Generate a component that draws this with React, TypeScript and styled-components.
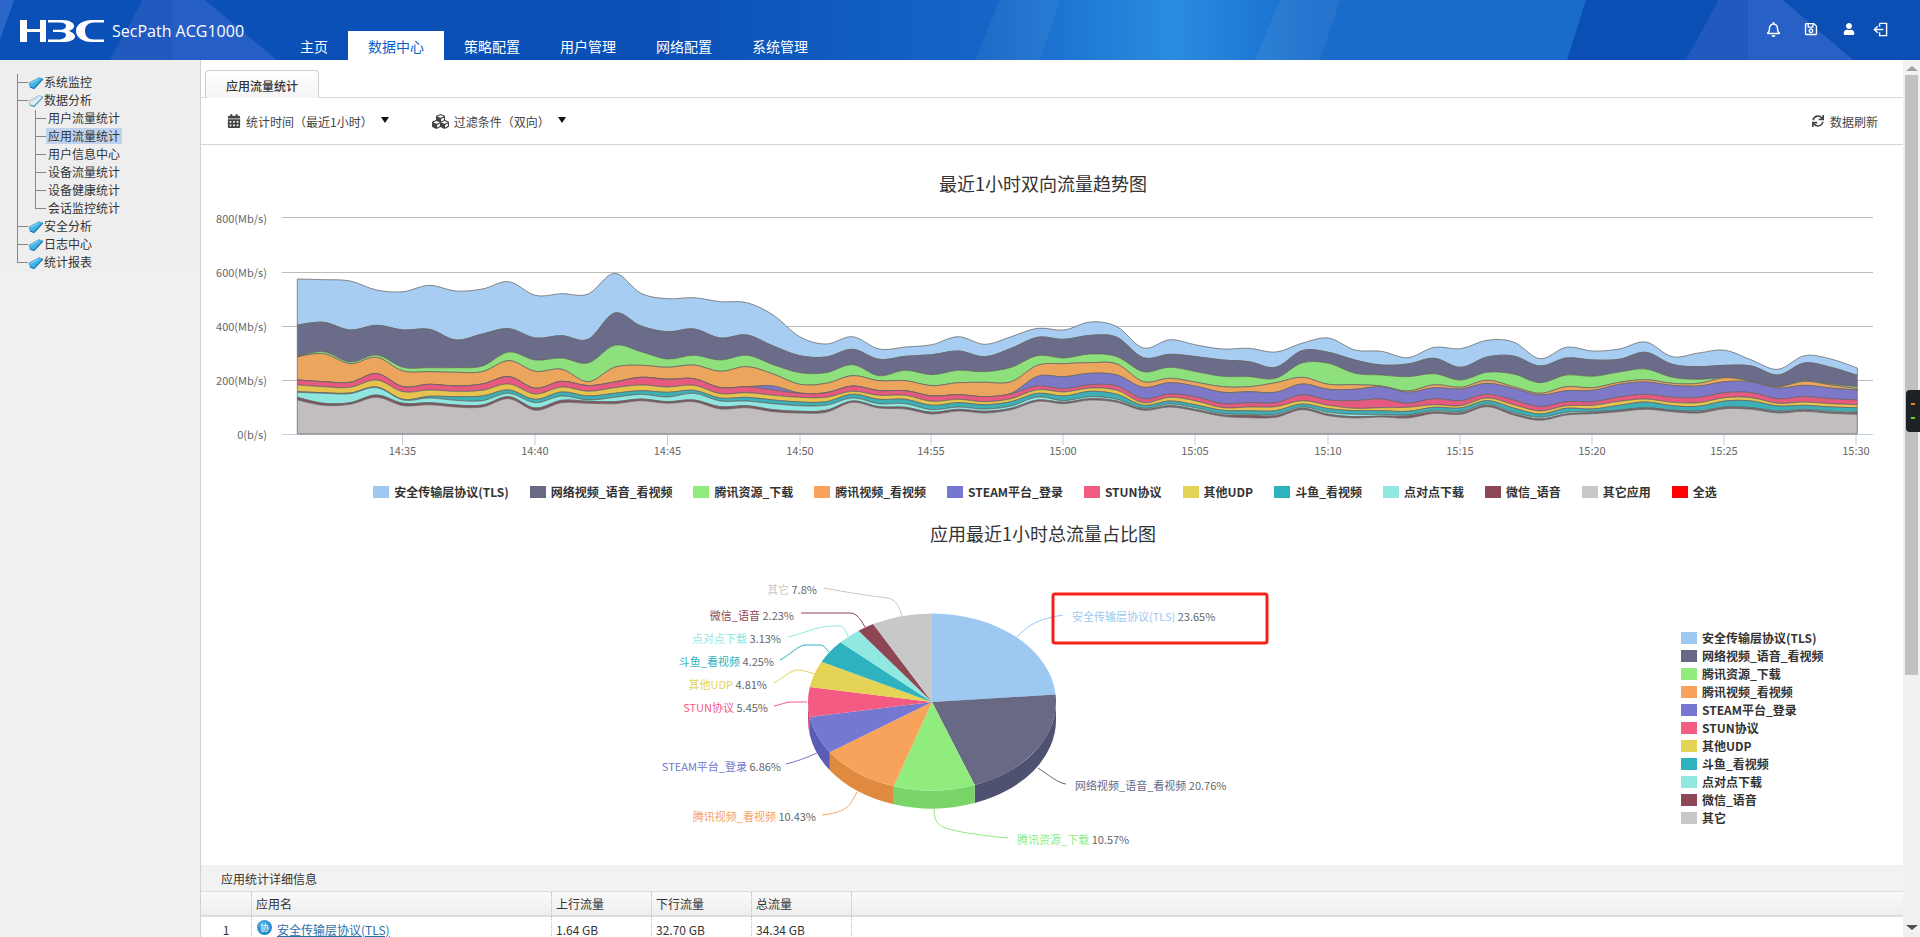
import React from 'react';
import styled, { createGlobalStyle } from 'styled-components';
import { FaRegBell, FaRegSave, FaUser, FaCalendarAlt, FaCubes, FaSync } from 'react-icons/fa';

const FONT = '"Noto Sans CJK SC","Noto Sans",sans-serif';

const Global = createGlobalStyle`
  html, body { margin: 0; padding: 0; height: 937px; overflow: hidden; background: #fff; }
  body { font-family: ${FONT}; font-size: 12px; color: #333; }
  * { box-sizing: border-box; }
`;

const Page = styled.div`display:flex;flex-direction:column;width:1920px;height:937px;overflow:hidden;`;
const Header = styled.header`position:relative;display:flex;height:60px;flex:none;background:#0b4fb5;overflow:hidden;`;
const HeaderArt = styled.svg`position:absolute;left:0;top:0;width:1920px;height:60px;`;
const Brand = styled.div`position:relative;display:flex;align-items:center;gap:8px;width:280px;padding:2px 0 0 20px;`;
const BrandName = styled.span`color:#fff;font:400 16px/20px "Open Sans",sans-serif;white-space:nowrap;`;
const Nav = styled.nav`position:relative;display:flex;align-self:flex-end;height:29px;`;
const NavItem = styled.a<{ $active?: boolean }>`
  padding:0 20px;font-size:14px;line-height:30px;color:${p => (p.$active ? '#0d5fc4' : '#fff')};
  background:${p => (p.$active ? '#fff' : 'transparent')};
`;
const HeaderTools = styled.div`position:relative;display:flex;margin-left:auto;padding:0 28px 2px 0;align-items:center;`;
const ToolSlot = styled.span<{ $w: number }>`display:flex;justify-content:center;width:${p => p.$w}px;color:#fff;`;

const Body = styled.div`display:flex;flex:1;min-height:0;`;
const Sidebar = styled.aside`width:201px;flex:none;background:#f1f1f1;border-right:1px solid #d0d0d0;`;
const Tree = styled.div`position:relative;padding:13px 0 1px;background:#eee;
  &::before{content:'';position:absolute;left:17px;top:14px;bottom:10px;width:1px;background:#888;}`;
const TreeRow = styled.div<{ $indent: number }>`display:flex;align-items:center;height:18px;padding-left:${p => p.$indent}px;line-height:18px;color:#333;`;
const Tick = styled.span`width:11px;height:1px;background:#888;flex:none;`;
const SubTree = styled.div`position:relative;
  &::before{content:'';position:absolute;left:35px;top:1px;bottom:9px;width:1px;background:#888;}`;
const NodeLabel = styled.span`margin-left:1px;`;
const LeafLabel = styled.span<{ $active?: boolean }>`padding:0 2px;height:16px;line-height:16px;background:${p => (p.$active ? '#bfd3ee' : 'transparent')};`;

const MainArea = styled.main`flex:1;min-width:0;overflow:hidden;background:#fff;`;
const TabBar = styled.div`display:flex;height:38px;padding:10px 0 0 4px;border-bottom:1px solid #d8d8d8;`;
const Tab = styled.div`height:28px;padding:0 20px;line-height:29px;border:1px solid #d0d0d0;border-bottom:none;border-radius:4px 4px 0 0;background:linear-gradient(#fff,#f4f4f4);color:#333;font-weight:500;`;
const Toolbar = styled.div`display:flex;align-items:center;height:47px;padding:0 25px 0 26px;border-bottom:1px solid #d4d4d4;`;
const ToolItem = styled.div<{ $gap?: number }>`display:flex;align-items:center;gap:5px;margin-right:${p => p.$gap ?? 0}px;color:#444;`;
const Caret = styled.span`width:0;height:0;margin-left:3px;margin-top:-2px;border:4px solid transparent;border-top:6px solid #111;border-bottom:none;`;
const Refresh = styled(ToolItem)`margin-left:auto;gap:6px;`;
const ChartTitle = styled.h2<{ $top: number }>`width:1684px;margin:${p => p.$top}px 0 0;text-align:center;font-weight:400;font-size:18px;line-height:24px;color:#333;`;
const TrendSvg = styled.svg`display:block;width:1702px;height:275px;`;
const HLegend = styled.div`display:flex;justify-content:center;gap:21px;width:1688px;height:20px;margin-top:12px;align-items:center;`;
const LegendItem = styled.div`display:flex;align-items:center;gap:5px;font-weight:700;color:#333;line-height:18px;white-space:nowrap;`;
const Swatch = styled.span<{ $c: string }>`width:16px;height:12px;flex:none;background:${p => p.$c};`;
const PieRow = styled.div`display:flex;height:320px;`;
const PieSvg = styled.svg`display:block;width:1480px;height:320px;flex:none;`;
const VLegend = styled.div`display:flex;flex-direction:column;padding-top:84px;`;
const VLegendItem = styled(LegendItem)`height:18px;`;

const SectionTitle = styled.div`height:27px;padding-left:20px;line-height:27px;background:#f2f2f2;border-bottom:1px solid #ddd;color:#333;`;
const GridRow = styled.div<{ $head?: boolean }>`
  display:grid;grid-template-columns:51px 300px 100px 100px 100px 1fr;height:25px;
  background:${p => (p.$head ? 'linear-gradient(#fafafa,#eee)' : '#fff')};
  border-bottom:${p => (p.$head ? '2px solid #ddd' : 'none')};
`;
const Cell = styled.div<{ $center?: boolean }>`display:flex;align-items:center;justify-content:${p => (p.$center ? 'center' : 'flex-start')};gap:5px;padding:0 4px;line-height:24px;border-right:1px dotted #bbb;color:#333;`;
const LastCell = styled.div``;
const AppBadge = styled.span`display:flex;align-items:center;justify-content:center;width:15px;height:15px;border-radius:50%;margin:-5px 0 0 1px;background:radial-gradient(circle at 40% 30%,#4db4e8,#0e76b6);color:#fff;font-size:9px;line-height:15px;`;
const AppLink = styled.a`color:#2c6ea8;text-decoration:underline;`;

const Scrollbar = styled.div`display:flex;flex-direction:column;align-items:center;width:17px;flex:none;background:#f1f1f1;`;
const ArrowUp = styled.span`width:0;height:0;margin:6px 0 4px;border:6px solid transparent;border-top:none;border-bottom:5px solid #a3a3a3;`;
const Thumb = styled.div`width:13px;height:600px;background:#c1c1c1;`;
const ArrowDown = styled.span`width:0;height:0;margin-top:auto;margin-bottom:7px;border:6px solid transparent;border-bottom:none;border-top:5px solid #505050;`;
const SideHandle = styled.div`position:absolute;right:0;top:390px;width:14px;height:42px;background:#1f2225;border-radius:4px 0 0 4px;display:flex;flex-direction:column;align-items:center;justify-content:center;gap:12px;`;
const HandleDot = styled.span<{ $c: string }>`width:4px;height:2px;background:${p => p.$c};`;
const Shell = styled.div`position:relative;`;

const SERIES = [
  ['安全传输层协议(TLS)', '#9dc8f1', '#a3cbf2', '#596a9e'],
  ['网络视频_语音_看视频', '#676985', '#6a6c8a', '#4f5170'],
  ['腾讯资源_下载', '#90ed7d', '#8ee07c', '#79d568'],
  ['腾讯视频_看视频', '#f7a35c', '#eca55c', '#e08a40'],
  ['STEAM平台_登录', '#7577d0', '#7d78c8', '#5a5cb5'],
  ['STUN协议', '#f45b82', '#e75a80', '#c94a6c'],
  ['其他UDP', '#e4d354', '#e5c34e', '#c4b440'],
  ['斗鱼_看视频', '#2fb2bf', '#3db0b5', '#2795a0'],
  ['点对点下载', '#91e8e1', '#8ee6de', '#78c8c2'],
  ['微信_语音', '#8d4653', '#85505f', '#733945'],
  ['其它', '#c8c8c8', '#c2bebf', '#a8a8a8'],
];

const D: number[][] = [
  [57,195,290,290,360,360,375,395,397,412,420],[59,187,275,281,365,365,380,398,400,430,436],
  [63,210,306,311,367,367,382,399,401,428,433],[90,196,285,292,341,341,360,381,383,405,412],
  [95,210,322,333,380,380,395,418,420,430,437],[76,208,323,335,373,373,390,409,414,428,434],
  [93,240,323,337,378,378,394,410,421,435,441],[87,222,318,335,372,372,391,408,422,435,441],
  [65,206,276,302,350,350,372,390,400,410,416],[106,234,300,334,385,385,402,418,428,444,451],
  [101,227,294,328,364,364,381,396,408,421,428],[102,238,309,365,377,377,394,408,420,424,430],
  [40,159,256,322,366,366,383,400,412,425,431],[100,198,275,316,352,352,375,392,403,417,422],
  [116,215,297,322,358,358,381,397,411,425,430],[113,207,286,315,356,356,376,391,400,420,425],
  [125,234,300,334,383,383,401,414,423,440,447],[128,225,286,320,380,380,398,412,423,437,443],
  [165,258,314,342,378,390,406,420,431,449,455],[230,287,338,373,399,400,412,426,437,454,459],
  [252,291,338,370,398,399,412,425,436,451,457],[230,268,314,347,378,378,394,403,414,423,427],
  [267,298,347,362,392,392,406,418,431,440,444],[261,289,331,362,392,392,406,418,431,442,447],
  [254,284,344,377,408,408,424,436,449,457,462],[230,273,331,368,404,404,418,428,441,448,453],
  [253,290,335,367,410,410,425,434,447,454,459],[230,265,322,365,400,402,416,425,438,445,449],
  [205,232,287,316,349,378,389,400,411,420,424],[210,238,294,311,350,386,396,408,422,427,431],
  [186,226,282,308,340,374,384,394,410,416,420],[200,232,290,312,345,378,391,403,418,423,427],
  [264,293,335,365,382,416,428,436,445,448,451],[239,283,322,355,368,402,412,423,432,437,441],
  [255,290,335,367,379,411,423,435,444,449,453],[267,300,349,380,397,431,443,451,461,465,469],
  [265,305,350,380,395,428,441,452,463,466,473],[276,322,355,368,397,428,440,452,463,467,472],
  [250,272,309,352,372,405,422,432,441,445,449],[234,277,310,373,388,420,436,446,457,463,467],
  [270,300,340,374,388,422,445,452,463,470,474],[274,315,345,378,380,417,443,452,463,468,471],
  [293,312,350,393,397,430,442,454,465,468,474],[262,295,341,374,383,416,434,442,452,456,460],
  [266,322,360,382,387,422,437,444,455,459,463],[241,291,337,361,370,403,414,422,432,436,440],
  [246,288,342,380,385,420,434,444,457,461,465],[296,318,368,400,405,440,453,462,472,477,481],
  [262,294,345,380,392,425,437,445,457,462,465],[273,300,349,383,391,425,436,447,455,458,461],
  [267,298,336,367,373,411,424,436,450,452,455],[246,277,327,359,366,403,417,426,443,445,448],
  [290,313,352,370,376,412,427,437,450,452,455],[279,320,358,370,378,412,428,439,453,456,459],
  [271,316,353,353,365,398,413,423,441,443,446],[300,318,364,364,366,398,413,423,443,445,448],
  [328,345,380,380,384,416,430,438,453,456,459],[287,309,362,364,376,410,426,436,448,451,454],
  [297,322,372,375,384,416,431,441,454,457,460],[324,346,380,386,390,420,434,443,456,459,463],
];

const X0 = 297.3, DX = 26.44, BASE = 434;
const toY = (z: number) => 260 + z / 3;
type P = [number, number];
const curveSeg = (pts: P[]) => {
  let d = '';
  for (let i = 0; i < pts.length - 1; i++) {
    const p0 = pts[Math.max(0, i - 1)], p1 = pts[i], p2 = pts[i + 1], p3 = pts[Math.min(pts.length - 1, i + 2)];
    const t = 0.17;
    d += `C${(p1[0] + (p2[0] - p0[0]) * t).toFixed(1)} ${(p1[1] + (p2[1] - p0[1]) * t).toFixed(1)} ${(p2[0] - (p3[0] - p1[0]) * t).toFixed(1)} ${(p2[1] - (p3[1] - p1[1]) * t).toFixed(1)} ${p2[0].toFixed(1)} ${p2[1].toFixed(1)}`;
  }
  return d;
};
const line = (s: number): P[] => D.map((r, i) => [X0 + DX * i, s >= 11 ? BASE : toY(r[s])]);
const areaPath = (s: number) => {
  const top = line(s), bot = line(s + 1).reverse();
  return `M${top[0][0]} ${top[0][1].toFixed(1)}${curveSeg(top)}L${bot[0][0].toFixed(1)} ${bot[0][1].toFixed(1)}${s >= 10 ? `L${bot[bot.length - 1][0]} ${BASE}` : curveSeg(bot)}Z`;
};

const YT: [string, number, number][] = [['800(Mb/s)', 217, 223], ['600(Mb/s)', 272, 277], ['400(Mb/s)', 326, 331], ['200(Mb/s)', 380, 385], ['0(b/s)', 434, 439]];
const XT: [string, number][] = [['14:35', 402.5], ['14:40', 535], ['14:45', 667.5], ['14:50', 800], ['14:55', 931], ['15:00', 1063], ['15:05', 1195], ['15:10', 1328], ['15:15', 1460], ['15:20', 1592], ['15:25', 1724], ['15:30', 1856]];

const TrendChart = () => (
  <TrendSvg viewBox="201 195 1702 275" fontFamily={FONT}>
    {YT.slice(0, 4).map(([, y]) => <line key={y} x1={282} x2={1873} y1={y + 0.5} y2={y + 0.5} stroke="#bdbdbd" />)}
    <line x1={282} x2={1873} y1={434.5} y2={434.5} stroke="#c0d0e0" />
    {XT.map(([, x]) => <line key={x} x1={x} x2={x} y1={434} y2={445} stroke="#c0d0e0" />)}
    {SERIES.map((s, i) => (
      <path key={s[0]} d={areaPath(i)} fill={s[2]} fillOpacity={i === 0 ? 0.96 : 1} stroke="#666" strokeOpacity={0.75} strokeWidth={1} />
    ))}
    {YT.map(([t, , b]) => <text key={t} x={267} y={b} textAnchor="end" fontSize={11} fill="#666">{t}</text>)}
    {XT.map(([t, x]) => <text key={t} x={x} y={455} textAnchor="middle" fontSize={11} fill="#666">{t}</text>)}
  </TrendSvg>
);

const CX = 932, CY = 702, RX = 124, RY = 88.5, DEPTH = 18;
const PCT = [23.65, 20.76, 10.57, 10.43, 6.86, 5.45, 4.81, 4.25, 3.13, 2.23, 7.86];
const pt = (a: number, dy = 0) => {
  const r = (a * Math.PI) / 180;
  return `${(CX + RX * Math.sin(r)).toFixed(1)} ${(CY - RY * Math.cos(r) + dy).toFixed(1)}`;
};
let acc = 0;
const SLICES = PCT.map((p, i) => {
  const a1 = acc; acc += (p / 100) * 360;
  return { a1, a2: acc, i };
});

type Lbl = { i: number; name: string; pct: string; x: number; y: number; anchor: 'start' | 'end'; d: string };
const LABELS: Lbl[] = [
  { i: 0, name: '安全传输层协议(TLS)', pct: '23.65%', x: 1072, y: 617, anchor: 'start', d: 'M1063 615C1045 618 1030 622 1017 637' },
  { i: 1, name: '网络视频_语音_看视频', pct: '20.76%', x: 1075, y: 786, anchor: 'start', d: 'M1066 784C1058 783 1050 776 1038 768' },
  { i: 2, name: '腾讯资源_下载', pct: '10.57%', x: 1017, y: 840, anchor: 'start', d: 'M1008 838C985 836 955 832 943 827C936 824 934 818 934 808' },
  { i: 3, name: '腾讯视频_看视频', pct: '10.43%', x: 816, y: 817, anchor: 'end', d: 'M822 815C832 814 840 812 846 808C851 804 854 798 857 792' },
  { i: 4, name: 'STEAM平台_登录', pct: '6.86%', x: 781, y: 767, anchor: 'end', d: 'M786 764C795 762 806 758 817 753' },
  { i: 5, name: 'STUN协议', pct: '5.45%', x: 768, y: 708, anchor: 'end', d: 'M774 706C780 705 785 702 792 702L807 702' },
  { i: 6, name: '其他UDP', pct: '4.81%', x: 767, y: 685, anchor: 'end', d: 'M774 683C782 679 790 670 798 670C804 670 810 673 815 674' },
  { i: 7, name: '斗鱼_看视频', pct: '4.25%', x: 774, y: 662, anchor: 'end', d: 'M780 660C790 655 798 645 806 645L821 645C825 646 827 650 829 652' },
  { i: 8, name: '点对点下载', pct: '3.13%', x: 781, y: 639, anchor: 'end', d: 'M788 637C802 634 818 626 832 626L841 626C845 628 846 632 848 636' },
  { i: 9, name: '微信_语音', pct: '2.23%', x: 794, y: 616, anchor: 'end', d: 'M801 613L850 613C856 613 860 618 865 627' },
  { i: 10, name: '其它', pct: '7.8%', x: 817, y: 590, anchor: 'end', d: 'M824 588C845 592 870 596 888 598C896 600 899 606 902 616' },
];

const PieChart = () => (
  <PieSvg viewBox="201 545 1480 320" fontFamily={FONT}>
    {SLICES.filter(s => s.a2 > 90 && s.a1 < 270).map(s => {
      const a = Math.max(s.a1, 90), b = Math.min(s.a2, 270);
      return <path key={s.i} d={`M${pt(a)}A${RX} ${RY} 0 0 1 ${pt(b)}L${pt(b, DEPTH)}A${RX} ${RY} 0 0 0 ${pt(a, DEPTH)}Z`} fill={SERIES[s.i][3]} />;
    })}
    {SLICES.map(s => (
      <path key={s.i} d={`M${CX} ${CY}L${pt(s.a1)}A${RX} ${RY} 0 0 1 ${pt(s.a2)}Z`} fill={SERIES[s.i][1]} />
    ))}
    {LABELS.map(l => (
      <g key={l.i}>
        <path d={l.d} fill="none" stroke={SERIES[l.i][1]} strokeWidth={1} />
        <text x={l.x} y={l.y + 4} textAnchor={l.anchor} fontSize={11} fill="#666">
          <tspan fill={SERIES[l.i][1]}>{l.name}</tspan> {l.pct}
        </text>
      </g>
    ))}
    <rect x={1053} y={594} width={214} height={49} rx={2} fill="none" stroke="#f5221a" strokeWidth={3} />
  </PieSvg>
);

const Logo = () => (
  <svg width={84} height={22} viewBox="0 0 84 22" fill="#fff" aria-label="H3C">
    <path d="M0 0H7V9H20V0H26V22H20V12H7V22H0Z" />
    <path d="M28 0H42C50 0 54 3 54 6C54 9 51 10 49 11C52 12 55 14 55 16.5C55 20 50 22 42 22H28V19.5H38C44 19.5 46 17 46 15C46 13 44 12 40 12H33V9.8H40C44 9.8 46 8 46 6C46 4 44 2.5 39 2.5H28Z" />
    <path d="M84 2.5V0H72C62 0 56 5 56 11C56 17 62 22 72 22H84V19.5H74C68 19.5 65 16 65 11C65 6 68 2.5 74 2.5Z" />
  </svg>
);

const Folder = ({ open }: { open?: boolean }) => (
  <svg width={15} height={13} viewBox="0 0 15 13">
    <path d="M1 7L11 1.5L15 3L6 12.5L2 11Z" fill={open ? '#e4eef4' : '#3fb2e8'} stroke="#6f9fbb" strokeWidth={0.6} />
    <path d="M2 11L6 12.5L15 3" fill="none" stroke={open ? '#4e9cc8' : '#1878b0'} strokeWidth={1.2} />
    <path d="M3 7.5L10.5 3.2" fill="none" stroke={open ? '#bcd8e8' : '#8fdcf8'} strokeWidth={1} />
  </svg>
);

const ExitIcon = () => (
  <svg width={15} height={15} viewBox="0 0 16 16" fill="none" stroke="#fff" strokeWidth={1.5}>
    <path d="M7 1.5H14.5V14.5H7V11M7 5V1.5" />
    <path d="M11 8H2M5 4.5L1.5 8L5 11.5" />
  </svg>
);

const NAV = ['主页', '数据中心', '策略配置', '用户管理', '网络配置', '系统管理'];
const TOP1 = ['系统监控'];
const SUBS = ['用户流量统计', '应用流量统计', '用户信息中心', '设备流量统计', '设备健康统计', '会话监控统计'];
const TOP2 = ['安全分析', '日志中心', '统计报表'];

const NodeRow = ({ label, open }: { label: string; open?: boolean }) => (
  <TreeRow $indent={17}><Tick /><Folder open={open} /><NodeLabel>{label}</NodeLabel></TreeRow>
);

export default function App() {
  return (
    <Shell>
      <Global />
      <Page>
        <Header>
          <HeaderArt viewBox="0 0 1920 60" preserveAspectRatio="none">
            <defs>
              <linearGradient id="hb" x1="0" x2="1" y1="0" y2="0">
                <stop offset="0" stopColor="#0b50b6" />
                <stop offset="0.42" stopColor="#0b50b6" />
                <stop offset="0.62" stopColor="#1465c6" />
                <stop offset="0.74" stopColor="#2a8ce0" />
                <stop offset="0.8" stopColor="#1d76d2" />
                <stop offset="0.83" stopColor="#196cca" />
              </linearGradient>
            </defs>
            <polygon points="0,0 1586,0 1567,60 0,60" fill="url(#hb)" />
            <polygon points="0,0 14,0 0,40" fill="#2a67c8" />
            <polygon points="143,0 205,0 277,60 110,60" fill="#2f63c8" fillOpacity={0.75} />
            <polygon points="143,0 172,0 172,60 110,60" fill="#2259bf" />
            <polygon points="1000,0 1060,0 1040,60 975,60" fill="#fff" fillOpacity={0.05} />
            <polygon points="1280,0 1340,0 1320,60 1255,60" fill="#fff" fillOpacity={0.06} />
            <polygon points="1719,0 1783,0 1853,60 1686,60" fill="#2f63c8" fillOpacity={0.85} />
            <polygon points="1719,0 1748,0 1748,60 1686,60" fill="#2259bf" />
          </HeaderArt>
          <Brand><Logo /><BrandName>SecPath ACG1000</BrandName></Brand>
          <Nav>{NAV.map((n, i) => <NavItem key={n} $active={i === 1}>{n}</NavItem>)}</Nav>
          <HeaderTools>
            <ToolSlot $w={38}><FaRegBell size={15} /></ToolSlot>
            <ToolSlot $w={38}><FaRegSave size={14} /></ToolSlot>
            <ToolSlot $w={38}><FaUser size={12} /></ToolSlot>
            <ToolSlot $w={24}><ExitIcon /></ToolSlot>
          </HeaderTools>
        </Header>
        <Body>
          <Sidebar>
            <Tree>
              {TOP1.map(t => <NodeRow key={t} label={t} />)}
              <NodeRow label="数据分析" open />
              <SubTree>
                {SUBS.map((s, i) => (
                  <TreeRow key={s} $indent={35}><Tick /><LeafLabel $active={i === 1}>{s}</LeafLabel></TreeRow>
                ))}
              </SubTree>
              {TOP2.map(t => <NodeRow key={t} label={t} />)}
            </Tree>
          </Sidebar>
          <MainArea>
            <TabBar><Tab>应用流量统计</Tab></TabBar>
            <Toolbar>
              <ToolItem $gap={43}><FaCalendarAlt size={14} color="#444" />统计时间（最近1小时）<Caret /></ToolItem>
              <ToolItem><FaCubes size={17} color="#444" />过滤条件（双向）<Caret /></ToolItem>
              <Refresh><FaSync size={12} color="#444" />数据刷新</Refresh>
            </Toolbar>
            <ChartTitle $top={26}>最近1小时双向流量趋势图</ChartTitle>
            <TrendChart />
            <HLegend>
              {SERIES.map(s => (
                <LegendItem key={s[0]}><Swatch $c={s[1]} />{s[0] === '其它' ? '其它应用' : s[0]}</LegendItem>
              ))}
              <LegendItem><Swatch $c="#ff0000" />全选</LegendItem>
            </HLegend>
            <ChartTitle $top={19}>应用最近1小时总流量占比图</ChartTitle>
            <PieRow>
              <PieChart />
              <VLegend>
                {SERIES.map(s => <VLegendItem key={s[0]}><Swatch $c={s[1]} />{s[0]}</VLegendItem>)}
              </VLegend>
            </PieRow>
            <SectionTitle>应用统计详细信息</SectionTitle>
            <GridRow $head>
              <Cell /><Cell>应用名</Cell><Cell>上行流量</Cell><Cell>下行流量</Cell><Cell>总流量</Cell><LastCell />
            </GridRow>
            <GridRow>
              <Cell $center>1</Cell>
              <Cell><AppBadge>协</AppBadge><AppLink>安全传输层协议(TLS)</AppLink></Cell>
              <Cell>1.64 GB</Cell><Cell>32.70 GB</Cell><Cell>34.34 GB</Cell><LastCell />
            </GridRow>
          </MainArea>
          <Scrollbar><ArrowUp /><Thumb /><ArrowDown /></Scrollbar>
        </Body>
      </Page>
      <SideHandle><HandleDot $c="#e08a1e" /><HandleDot $c="#5fd32a" /></SideHandle>
    </Shell>
  );
}
